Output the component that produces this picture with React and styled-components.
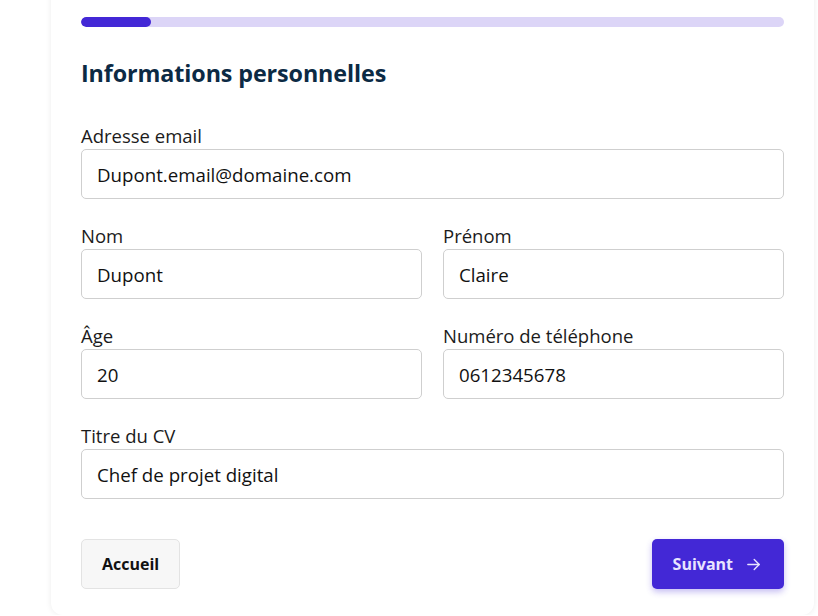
import styled, { createGlobalStyle } from "styled-components";

const GlobalStyle = createGlobalStyle`
  html, body {
    margin: 0;
    background: #ffffff;
    font-family: "Open Sans", "Noto Sans", sans-serif;
    overflow: hidden;
  }
  * { box-sizing: border-box; }
`;

const Page = styled.div`
  padding: 0 4px 0 51px;
`;

const Card = styled.div`
  margin-top: -30px;
  background: #fff;
  border-radius: 12px;
  box-shadow: 0 0 6px rgba(0, 0, 0, 0.08);
  padding: 47px 30px 26px 30px;
`;

const Track = styled.div`
  height: 10px;
  border-radius: 5px;
  background: #dcd5f7;
  overflow: hidden;
`;

const Fill = styled.div`
  height: 100%;
  border-radius: 5px;
  background: #4328d6;
`;

const Title = styled.h2`
  margin: 30px 0 34px;
  font-size: 23.3px;
  font-weight: 700;
  color: #0c2a44;
  line-height: 32px;
  letter-spacing: -0.1px;
`;

const Grid = styled.div`
  display: grid;
  grid-template-columns: 1fr 1fr;
  column-gap: 21px;
  row-gap: 24px;
`;

const Field = styled.label`
  display: flex;
  flex-direction: column;
  grid-column: ${(p) => (p.$full ? "1 / -1" : "auto")};
`;

const Label = styled.span`
  font-size: 18.5px;
  line-height: 26px;
  color: #1b1b1b;
`;

const Input = styled.input`
  height: 50px;
  border: 1px solid #cfcfcf;
  border-radius: 5px;
  padding: 0 15px;
  font-family: inherit;
  font-size: 18.7px;
  color: #111;
  background: #fff;
  outline: none;
`;

const Actions = styled.div`
  display: flex;
  justify-content: space-between;
  margin-top: 40px;
`;

const Button = styled.button`
  height: 50px;
  border-radius: 5px;
  font-family: inherit;
  font-size: 16px;
  font-weight: 700;
  display: flex;
  align-items: center;
  gap: 12px;
  cursor: pointer;
  ${(p) =>
    p.$primary
      ? `
    background: #4328d6;
    color: #e8e4ff;
    border: none;
    padding: 0 22px 0 21px;
    box-shadow: 0 3px 6px rgba(67, 40, 214, 0.3);
  `
      : `
    background: #f7f7f7;
    color: #111;
    border: 1px solid #e3e3e3;
    padding: 0 20px;
  `}
`;

const fields = [
  { id: "email", label: "Adresse email", value: "Dupont.email@domaine.com", full: true },
  { id: "nom", label: "Nom", value: "Dupont" },
  { id: "prenom", label: "Prénom", value: "Claire" },
  { id: "age", label: "Âge", value: "20" },
  { id: "tel", label: "Numéro de téléphone", value: "0612345678" },
  { id: "titre", label: "Titre du CV", value: "Chef de projet digital", full: true },
];

function Arrow() {
  return (
    <svg width="17" height="17" viewBox="0 0 24 24" fill="none" stroke="currentColor" strokeWidth="2" strokeLinecap="round" strokeLinejoin="round">
      <path d="M4 12h16" />
      <path d="m13 5 7 7-7 7" />
    </svg>
  );
}

export default function App() {
  const progress = 10;
  return (
    <Page>
      <GlobalStyle />
      <Card>
        <Track>
          <Fill style={{ width: `${progress}%` }} />
        </Track>
        <Title>Informations personnelles</Title>
        <Grid>
          {fields.map((f) => (
            <Field key={f.id} $full={f.full}>
              <Label>{f.label}</Label>
              <Input defaultValue={f.value} />
            </Field>
          ))}
        </Grid>
        <Actions>
          <Button>Accueil</Button>
          <Button $primary>
            Suivant <Arrow />
          </Button>
        </Actions>
      </Card>
    </Page>
  );
}
